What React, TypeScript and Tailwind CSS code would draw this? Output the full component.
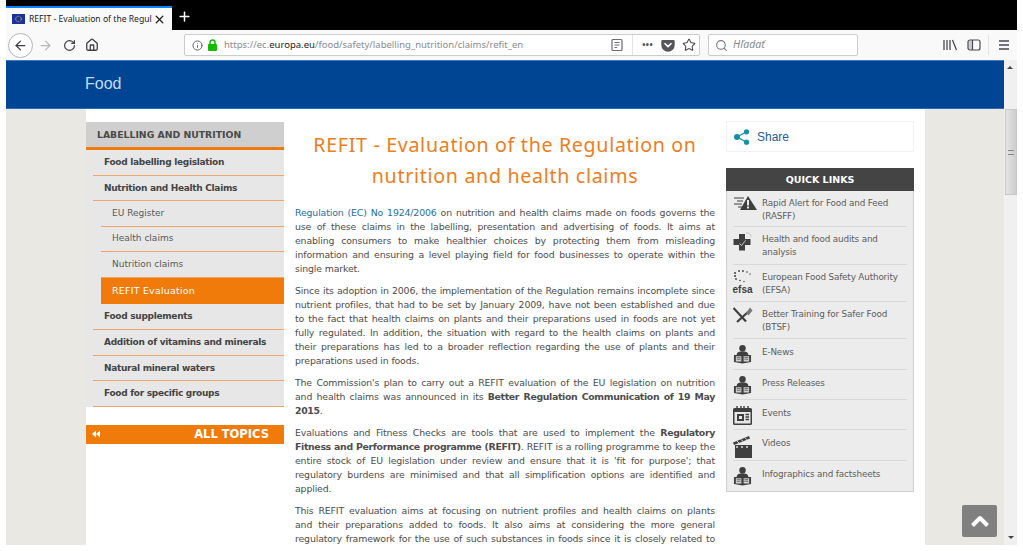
import React from "react";
import { ArrowLeft, ArrowRight, RotateCw, Home, Info, Star, Search, X, Plus } from "lucide-react";

const paras: React.ReactNode[][] = [
  [
    <><a className="text-[#1f6f9f]">Regulation (EC) No 1924/2006</a> on nutrition and health claims made on foods governs the</>,
    "use of these claims in the labelling, presentation and advertising of foods. It aims at",
    "enabling consumers to make healthier choices by protecting them from misleading",
    "information and ensuring a level playing field for food businesses to operate within the",
    "single market.",
  ],
  [
    "Since its adoption in 2006, the implementation of the Regulation remains incomplete since",
    "nutrient profiles, that had to be set by January 2009, have not been established and due",
    "to the fact that health claims on plants and their preparations used in foods are not yet",
    "fully regulated. In addition, the situation with regard to the health claims on plants and",
    "their preparations has led to a broader reflection regarding the use of plants and their",
    "preparations used in foods.",
  ],
  [
    "The Commission's plan to carry out a REFIT evaluation of the EU legislation on nutrition",
    <>and health claims was announced in its <b>Better Regulation Communication of 19 May</b></>,
    <><b>2015</b>.</>,
  ],
  [
    <>Evaluations and Fitness Checks are tools that are used to implement the <b>Regulatory</b></>,
    <><b>Fitness and Performance programme (REFIT)</b>. REFIT is a rolling programme to keep the</>,
    "entire stock of EU legislation under review and ensure that it is 'fit for purpose'; that",
    "regulatory burdens are minimised and that all simplification options are identified and",
    "applied.",
  ],
  [
    "This REFIT evaluation aims at focusing on nutrient profiles and health claims on plants",
    "and their preparations added to foods. It also aims at considering the more general",
    "regulatory framework for the use of such substances in foods since it is closely related to",
  ],
];

const openEnded = [false, false, false, false, true];

function Para({ lines, open }: { lines: React.ReactNode[]; open: boolean }) {
  return (
    <div className="mb-2">
      {lines.map((l, i) => (
        <div
          key={i}
          className={
            i < lines.length - 1 || open
              ? "h-[14px] text-justify [text-align-last:justify]"
              : "h-[14px]"
          }
        >
          {l}
        </div>
      ))}
    </div>
  );
}

const Padlock = () => (
  <svg width="11" height="12" viewBox="0 0 11 12">
    <path d="M3 5.500V3.600a2.500 2.500 0 0 1 5 0v1.900" stroke="#12bc00" strokeWidth="1.500" fill="none" />
    <rect x="1" y="5" width="9" height="7" rx="1" fill="#12bc00" />
  </svg>
);
const Reader = () => (
  <svg width="14" height="14" viewBox="0 0 14 14" fill="none" stroke="#6b6b70" strokeWidth="1.2">
    <rect x="2" y="1.5" width="10" height="11" rx="1" />
    <path d="M4.5 4.5h5M4.5 7h5M4.5 9.5h2.5" />
  </svg>
);
const Pocket = () => (
  <svg width="14" height="13" viewBox="0 0 14 13">
    <path d="M1.5 1h11A1.2 1.2 0 0 1 13.7 2.2V6a6.7 6.7 0 0 1-13.4 0V2.2A1.2 1.2 0 0 1 1.500 1Z" fill="#55555a" />
    <path d="M4 4.700 7 7.600 10 4.700" stroke="#fff" strokeWidth="1.600" fill="none" strokeLinecap="round" />
  </svg>
);
const Library = () => (
  <svg width="16" height="14" viewBox="0 0 16 14" stroke="#4a4a4f" strokeWidth="1.300" fill="none">
    <path d="M2 2v10M5 2v10M8 2v10M10.500 2l4 10" />
  </svg>
);
const SidebarIcon = () => (
  <svg width="14" height="14" viewBox="0 0 14 14" fill="none" stroke="#4a4a4f" strokeWidth="1.200">
    <rect x="1" y="2" width="12" height="10" rx="2" />
    <path d="M5.500 2v10" />
    <rect x="1.500" y="2.500" width="4" height="9" fill="#4a4a4f" stroke="none" opacity="0.25" />
  </svg>
);
const Burger = () => (
  <svg width="14" height="12" viewBox="0 0 14 12" stroke="#4a4a4f" strokeWidth="1.400">
    <path d="M2 2h10M2 6h10M2 10h10" />
  </svg>
);
const Flag = () => (
  <svg width="13" height="10" viewBox="0 0 13 10">
    <rect width="13" height="10" fill="#1c2f9e" />
    <circle cx="6.500" cy="5" r="2.800" fill="none" stroke="#d6c84a" strokeWidth="1" strokeDasharray="1 0.800" />
  </svg>
);
const DoubleLeft = () => (
  <svg width="8" height="8" viewBox="0 0 8 8" fill="#fff">
    <path d="M4 0.500V7.500L0 4ZM8 0.500V7.500L4 4Z" />
  </svg>
);

const G = "#3f3f3f";
const AlertIcon = () => (
  <svg width="24" height="15" viewBox="0 0 24 15">
    <path d="M1 2h10M4 5h6M1 8h8M5 11h4" stroke={G} strokeWidth="1" />
    <path d="M15 0 24 14 7 14Z" fill={G} />
    <rect x="14" y="4" width="2" height="5.500" fill="#eee" />
    <rect x="14" y="10.500" width="2" height="2" fill="#eee" />
  </svg>
);
const CrossIcon = () => (
  <svg width="19" height="19" viewBox="0 0 19 19">
    <path d="M6 2h6v5h5.500v6H12v5.500H6V13H0.500V7H6Z" fill={G} />
    <path d="M6.500 11.500l2 2 4-5" stroke="#ddd" strokeWidth="0.900" fill="none" />
    <path d="M13 1a4 4 0 0 1 5 4" stroke="#aaa" strokeWidth="0.700" fill="none" />
  </svg>
);
const EfsaIcon = () => (
  <div className="flex w-[19px] flex-col items-center">
    <svg width="19" height="14" viewBox="0 0 19 14" fill={G}>
      <circle cx="2" cy="3" r="1" /><circle cx="6" cy="1" r="0.900" /><circle cx="10" cy="1" r="0.900" /><circle cx="14" cy="2" r="0.800" />
      <circle cx="17" cy="4" r="0.700" /><circle cx="2" cy="6" r="1" /><circle cx="3" cy="9" r="0.900" /><circle cx="7" cy="10.500" r="0.800" /><circle cx="11" cy="11.500" r="0.700" />
    </svg>
    <span className="mt-[1px] font-['Liberation_Sans',sans-serif] text-[10px] leading-[9px] font-bold text-[#3f3f3f]">efsa</span>
  </div>
);
const ForkIcon = () => (
  <svg width="20" height="16" viewBox="0 0 20 16">
    <path d="M0.500 1 13 14.500" stroke={G} strokeWidth="2.200" />
    <path d="M4 15 15 5" stroke={G} strokeWidth="2.200" />
    <path d="M13 6 17 0.500l2.500 3-4 5Z" fill="#777" />
  </svg>
);
const NewsIcon = () => (
  <svg width="19" height="19" viewBox="0 0 20 20">
    <circle cx="10" cy="3.500" r="3.400" fill={G} />
    <path d="M4 9.500a6 3 0 0 1 12 0v1H4Z" fill={G} />
    <path d="M1 10.500h18v7.500l-9 1.500-9-1.500Z" fill={G} />
    <path d="M3 11.800h5.800v5.500H3ZM11.200 11.800H17v5.500h-5.800Z" fill="#cfcfcf" />
    <path d="M4 13.300h4M4 15h4M12 13.300h4M12 15h4" stroke={G} strokeWidth="0.700" />
  </svg>
);
const CalIcon = () => (
  <svg width="19" height="19" viewBox="0 0 19 19">
    <rect x="0" y="2" width="19" height="17" rx="1.500" fill={G} />
    <rect x="1.500" y="6" width="16" height="11.500" fill="#e6e6e6" />
    <path d="M4 0v3M8 0v3M11 0v3M15 0v3" stroke={G} strokeWidth="1.400" />
    <rect x="4" y="8" width="7" height="7" fill={G} />
    <rect x="6" y="10" width="3" height="3" fill="#e6e6e6" />
    <path d="M12.500 8.500h3.500M12.500 11h3.500M12.500 13.500h3.500" stroke={G} strokeWidth="1.300" />
  </svg>
);
const ClapIcon = () => (
  <svg width="19" height="22" viewBox="0 0 19 22">
    <path d="M0 6.500 16 0l1 2.400L1 8.900Z" fill={G} />
    <path d="M4 5l2 2M8 3.400l2 2M12 1.800l2 2" stroke="#ddd" strokeWidth="1" />
    <rect x="2" y="9" width="17" height="13" fill={G} />
    <path d="M3 11h2M8 11h2M13 11h2" stroke="#ddd" strokeWidth="1.400" />
  </svg>
);

const quick = [
  { h: 36, pt: "pt-[6px]", t: ["Rapid Alert for Food and Feed", "(RASFF)"], i: <AlertIcon /> },
  { h: 38, pt: "pt-[6px]", t: ["Health and food audits and", "analysis"], i: <CrossIcon /> },
  { h: 37, pt: "pt-[6px]", t: ["European Food Safety Authority", "(EFSA)"], i: <EfsaIcon /> },
  { h: 37, pt: "pt-[6px]", t: ["Better Training for Safer Food", "(BTSF)"], i: <ForkIcon /> },
  { h: 31, pt: "pt-[7px]", t: ["E-News"], i: <NewsIcon /> },
  { h: 30, pt: "pt-[7px]", t: ["Press Releases"], i: <NewsIcon /> },
  { h: 30, pt: "pt-[7px]", t: ["Events"], i: <CalIcon /> },
  { h: 31, pt: "pt-[7px]", t: ["Videos"], i: <ClapIcon /> },
  { h: 30, pt: "pt-[7px]", t: ["Infographics and factsheets"], i: <NewsIcon /> },
];

const side: { t: string; sub?: boolean; active?: boolean }[] = [
  { t: "Food labelling legislation" },
  { t: "Nutrition and Health Claims" },
  { t: "EU Register", sub: true },
  { t: "Health claims", sub: true },
  { t: "Nutrition claims", sub: true },
  { t: "REFIT Evaluation", sub: true, active: true },
  { t: "Food supplements" },
  { t: "Addition of vitamins and minerals" },
  { t: "Natural mineral waters" },
  { t: "Food for specific groups" },
];

function SideItem({ t, sub, active }: { t: string; sub?: boolean; active?: boolean }) {
  if (active)
    return (
      <div className="ml-[15px] flex h-[26.4px] items-center bg-[#f07a0a] pl-[11px] text-[9.5px] tracking-[0.2px] text-white">{t}</div>
    );
  return (
    <div
      className={
        sub
          ? "ml-[15px] flex h-[25.6px] items-center border-b border-[#efa567] pl-[11px] text-[9px] text-[#5a5a5a]"
          : "ml-[7px] flex h-[25.6px] items-center border-b border-[#efa567] pt-[1px] pl-[11px] text-[9px] font-bold tracking-[-0.3px] text-[#444]"
      }
    >
      {t}
    </div>
  );
}

export default function App() {
  return (
    <div className="relative h-[551px] w-[1023px] overflow-hidden bg-white font-['DejaVu_Sans',Verdana,sans-serif]">
      <div className="mx-[6px] w-[1011px]">
        {/* Tab strip */}
        <div className="flex h-[30px] bg-black pt-[6px] font-['Noto_Sans',sans-serif]">
          <div className="flex h-[24px] w-[166px] items-center border-t-2 border-[#0a84ff] bg-[#f9f9fa] pl-[6px] text-[8.6px] text-[#222]">
            <Flag />
            <span className="ml-[4px] w-[124px] overflow-hidden whitespace-nowrap">REFIT - Evaluation of the Regul</span>
            <X size={13} strokeWidth={2.4} className="text-[#222]" />
          </div>
          <Plus size={15} strokeWidth={2.4} className="mt-[3px] ml-[5px] text-white" />
        </div>
        {/* Toolbar */}
        <div className="flex h-[30px] items-center bg-[#f9f9fa]">
          <div className="ml-[2px] flex h-[25px] w-[25px] items-center justify-center rounded-full border border-[#b5b5b5] bg-white">
            <ArrowLeft size={15} className="text-[#3f3f44]" />
          </div>
          <ArrowRight size={15} className="ml-[5px] text-[#b8b8bb]" />
          <RotateCw size={13} strokeWidth={2.2} className="ml-[10px] text-[#3f3f44]" />
          <Home size={14} strokeWidth={2.2} className="ml-[9px] text-[#3f3f44]" />
          <div className="ml-[85px] flex h-[22px] w-[516px] items-center rounded-[2px] border border-[#ccc] bg-white pl-[7px] font-['Noto_Sans',sans-serif] text-[9.5px] text-[#8a8a8f]">
            <Info size={11} className="text-[#5a5a5f]" />
            <span className="ml-[4px]"><Padlock /></span>
            <span className="ml-[6px] whitespace-nowrap">
              https://ec.<span className="text-[#222]">europa.eu</span>/food/safety/labelling_nutrition/claims/refit_en
            </span>
            <div className="ml-auto flex items-center">
              <Reader />
              <div className="mr-[9px] ml-[8px] h-[20px] w-px bg-[#e3e3e3]" />
              <span className="mr-[8px] text-[8.5px] leading-none font-bold tracking-[0.4px] text-[#4a4a4f]">•••</span>
              <Pocket />
              <Star size={14} strokeWidth={1.8} className="mr-[3px] ml-[7px] text-[#4a4a4f]" />
            </div>
          </div>
          <div className="ml-[8px] flex h-[22px] w-[150px] items-center rounded-[2px] border border-[#ccc] bg-white pl-[6px] font-['Noto_Sans',sans-serif] text-[10.5px] text-[#8a8a8f] italic">
            <Search size={13} className="text-[#7a7a7f]" />
            <span className="ml-[5px]">Hľadať</span>
          </div>
          <div className="ml-[84px]"><Library /></div>
          <div className="ml-[9px]"><SidebarIcon /></div>
          <div className="mr-[8px] ml-[7px] h-[20px] w-px bg-[#e3e3e3]" />
          <Burger />
        </div>

        <div className="flex h-[485px] overflow-hidden">
          <div className="w-[998px] shrink-0">
            {/* Blue header */}
            <div className="flex h-[49px] items-center border-t border-b border-t-[#3a78c0] border-b-[#2a6ab5] bg-[#004494] pb-[2px] pl-[79px] font-['Liberation_Sans',sans-serif] text-[16px] text-[#c4dcf7]">
              Food
            </div>
            {/* Page */}
            <div className="flex h-[436px] bg-[#eae8e2] pr-[79px] pl-[80px]">
              <div className="flex w-[839px] bg-white pt-[13px]">
                {/* Left nav */}
                <div className="w-[198px] shrink-0">
                  <div className="bg-[#e7e7e7]">
                    <div className="flex h-[28px] items-center border-b-[3px] border-[#f07a0a] bg-[#cfcfcf] pl-[11px] text-[9.3px] font-bold text-[#4a4a4a]">
                      LABELLING AND NUTRITION
                    </div>
                    {side.map((s) => (
                      <SideItem key={s.t} {...s} />
                    ))}
                  </div>
                  <div className="mt-[18px] flex h-[19px] items-center justify-between bg-[#f07a0a] pr-[15px] pl-[6px] font-bold text-white">
                    <DoubleLeft />
                    <span className="pt-[1px] text-[11.5px]">ALL TOPICS</span>
                  </div>
                </div>
                {/* Main */}
                <div className="ml-[11px] w-[420px] shrink-0">
                  <h1 className="mt-[7px] mb-[15px] text-center font-['Noto_Sans',sans-serif] text-[19.6px] leading-[31px] tracking-[0.7px] text-[#ee7d1c]">
                    REFIT - Evaluation of the Regulation on
                    <br />
                    nutrition and health claims
                  </h1>
                  <div className="text-[9.4px] leading-[14px] tracking-[-0.15px] text-[#4d4d4d] [&_b]:tracking-[-0.35px]">
                    {paras.map((p, i) => (
                      <Para key={i} lines={p} open={openEnded[i]} />
                    ))}
                  </div>
                </div>
                {/* Right */}
                <div className="mt-[-1px] ml-[11px] w-[188px] shrink-0">
                  <div className="flex h-[31px] items-center border border-[#f1f1f1] pt-[1px] pl-[7px] font-['Liberation_Sans',sans-serif] text-[12px] text-[#1f5a9c]">
                    <svg width="16" height="16" viewBox="0 0 16 16" fill="#1590a8">
                      <circle cx="3" cy="8" r="3" />
                      <circle cx="12.500" cy="2.800" r="2.600" />
                      <circle cx="12.500" cy="13.200" r="2.600" />
                      <path d="M3 8l9.500-5.200M3 8l9.500 5.200" stroke="#1590a8" strokeWidth="1.300" />
                    </svg>
                    <span className="ml-[7px]">Share</span>
                  </div>
                  <div className="mt-[16px] border border-[#cfcfcf] bg-[#ececec]">
                    <div className="-mx-px -mt-px flex h-[23px] items-center justify-center bg-[#444] pt-[1px] text-[9.5px] font-bold text-white">
                      QUICK LINKS
                    </div>
                    <div className="px-[6px]">
                      {quick.map((q, i) => (
                        <div
                          key={i}
                          style={{ height: q.h }}
                          className={
                            (i < quick.length - 1 ? "flex border-b border-[#d8d8d8] " : "flex ") + q.pt
                          }
                        >
                          <div className="-mt-[1px] flex w-[29px] shrink-0 justify-start">{q.i}</div>
                          <div className="text-[8.8px] leading-[12.5px] tracking-[-0.15px] whitespace-nowrap text-[#5c5c5c]">
                            {q.t.map((x) => (
                              <div key={x}>{x}</div>
                            ))}
                          </div>
                        </div>
                      ))}
                    </div>
                  </div>
                </div>
              </div>
            </div>
          </div>
          {/* Scrollbar */}
          <div className="relative w-[13px] bg-[#f0f0f0]">
            <div className="absolute top-[6px] left-[3px] h-0 w-0 border-x-[3px] border-b-[3px] border-x-transparent border-b-[#444]" />
            <div className="absolute top-[49px] left-[1px] flex h-[86px] w-[12px] items-center justify-center border border-[#c8c8c8] bg-gradient-to-r from-[#e4e4e4] to-[#cdcdcd]">
              <div className="h-[5px] w-[6px] border-y border-[#888]" />
            </div>
            <div className="absolute right-[3px] bottom-[6px] h-0 w-0 border-x-[3px] border-t-[3px] border-x-transparent border-t-[#444]" />
          </div>
        </div>
      </div>
      {/* Back to top */}
      <div className="absolute top-[505px] left-[962px] flex h-[32px] w-[35px] items-center justify-center rounded-[2px] bg-[#808080]">
        <svg width="20" height="13" viewBox="0 0 20 13">
          <path d="M2.500 10.500 10 3l7.500 7.500" stroke="#fff" strokeWidth="4" fill="none" strokeLinejoin="round" />
        </svg>
      </div>
    </div>
  );
}
